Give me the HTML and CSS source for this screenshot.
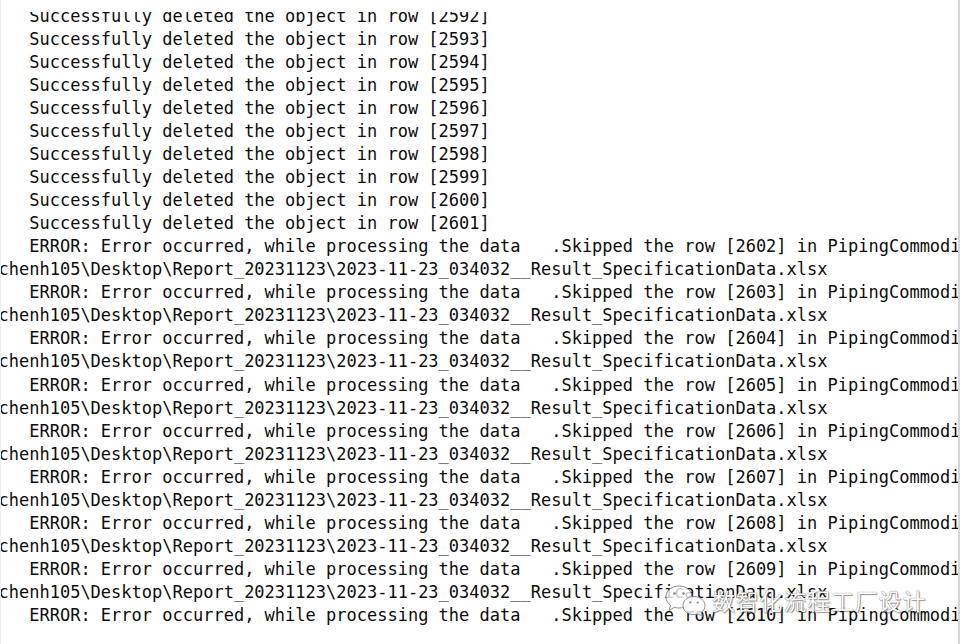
FILE: index.html
```html
<!DOCTYPE html>
<html lang="en">
<head>
<meta charset="utf-8">
<title>Console log</title>
<link rel="stylesheet" href="styles.css">
</head>
<body>
<div class="screen">
  <div class="viewport">
<pre class="log">   Successfully deleted the object in row [2592]
   Successfully deleted the object in row [2593]
   Successfully deleted the object in row [2594]
   Successfully deleted the object in row [2595]
   Successfully deleted the object in row [2596]
   Successfully deleted the object in row [2597]
   Successfully deleted the object in row [2598]
   Successfully deleted the object in row [2599]
   Successfully deleted the object in row [2600]
   Successfully deleted the object in row [2601]
   ERROR: Error occurred, while processing the data   .Skipped the row [2602] in PipingCommodityFilter
chenh105\Desktop\Report_20231123\2023-11-23_034032__Result_SpecificationData.xlsx
   ERROR: Error occurred, while processing the data   .Skipped the row [2603] in PipingCommodityFilter
chenh105\Desktop\Report_20231123\2023-11-23_034032__Result_SpecificationData.xlsx
   ERROR: Error occurred, while processing the data   .Skipped the row [2604] in PipingCommodityFilter
chenh105\Desktop\Report_20231123\2023-11-23_034032__Result_SpecificationData.xlsx
   ERROR: Error occurred, while processing the data   .Skipped the row [2605] in PipingCommodityFilter
chenh105\Desktop\Report_20231123\2023-11-23_034032__Result_SpecificationData.xlsx
   ERROR: Error occurred, while processing the data   .Skipped the row [2606] in PipingCommodityFilter
chenh105\Desktop\Report_20231123\2023-11-23_034032__Result_SpecificationData.xlsx
   ERROR: Error occurred, while processing the data   .Skipped the row [2607] in PipingCommodityFilter
chenh105\Desktop\Report_20231123\2023-11-23_034032__Result_SpecificationData.xlsx
   ERROR: Error occurred, while processing the data   .Skipped the row [2608] in PipingCommodityFilter
chenh105\Desktop\Report_20231123\2023-11-23_034032__Result_SpecificationData.xlsx
   ERROR: Error occurred, while processing the data   .Skipped the row [2609] in PipingCommodityFilter
chenh105\Desktop\Report_20231123\2023-11-23_034032__Result_SpecificationData.xlsx
   ERROR: Error occurred, while processing the data   .Skipped the row [2610] in PipingCommodityFilter</pre>
  </div>
  <div class="watermark">
    <svg class="wechat" width="46" height="36" viewBox="0 0 46 36">
      <path class="bubble" d="M15 4 C22.5 4 28 8.8 28 15 C28 21.2 22.5 26 15 26 C13.3 26 11.7 25.7 10.3 25.3 L5 28.5 L6.6 23.4 C3.8 21.4 2 18.4 2 15 C2 8.8 7.5 4 15 4 Z"/>
      <circle class="eye" cx="10.5" cy="11.5" r="1.3"/>
      <circle class="eye" cx="19.5" cy="11.5" r="1.3"/>
      <path class="bubble" d="M30 14.5 C36.4 14.5 41 18.6 41 23.6 C41 26.4 39.6 28.8 37.4 30.5 L38.6 34.5 L34.2 32 C32.9 32.4 31.5 32.6 30 32.6 C23.6 32.6 19 28.6 19 23.6 C19 18.6 23.6 14.5 30 14.5 Z"/>
      <circle class="eye" cx="26.3" cy="20.5" r="1.1"/>
      <circle class="eye" cx="33.7" cy="20.5" r="1.1"/>
    </svg>
    <span class="wm-text">数智化流程工厂设计</span>
  </div>
</div>
</body>
</html>
```

FILE: styles.css
```css
html, body {
  margin: 0;
  padding: 0;
  background: #ffffff;
}

.screen {
  position: relative;
  width: 960px;
  height: 644px;
  box-sizing: border-box;
  overflow: hidden;
  background: #ffffff;
  border-left: 1px solid #ececec;
  border-right: 2px solid #d6d6d6;
}

.viewport {
  margin-top: 12px;
  height: 632px;
  overflow: hidden;
}

.log {
  margin: -7.5px 0 0 -2.5px;
  font-family: "DejaVu Sans Mono", monospace;
  font-size: 17px;
  line-height: 23.06px;
  color: #0c0c0c;
  white-space: pre;
}

.watermark {
  position: absolute;
  left: 663px;
  top: 582px;
  display: flex;
  align-items: center;
  gap: 2px;
}

.wechat .bubble {
  fill: rgba(255, 255, 255, 0.78);
  stroke: rgba(120, 120, 120, 0.85);
  stroke-width: 1;
}

.wechat .eye {
  fill: rgba(110, 110, 110, 0.85);
}

.wm-text {
  font-family: "Noto Sans CJK SC", sans-serif;
  font-size: 23px;
  line-height: 1;
  letter-spacing: 0.8px;
  color: #ffffff;
  text-shadow: 0 0 1px rgba(60, 60, 60, 0.9), 1px 1px 1px rgba(60, 60, 60, 0.5);
}
```
